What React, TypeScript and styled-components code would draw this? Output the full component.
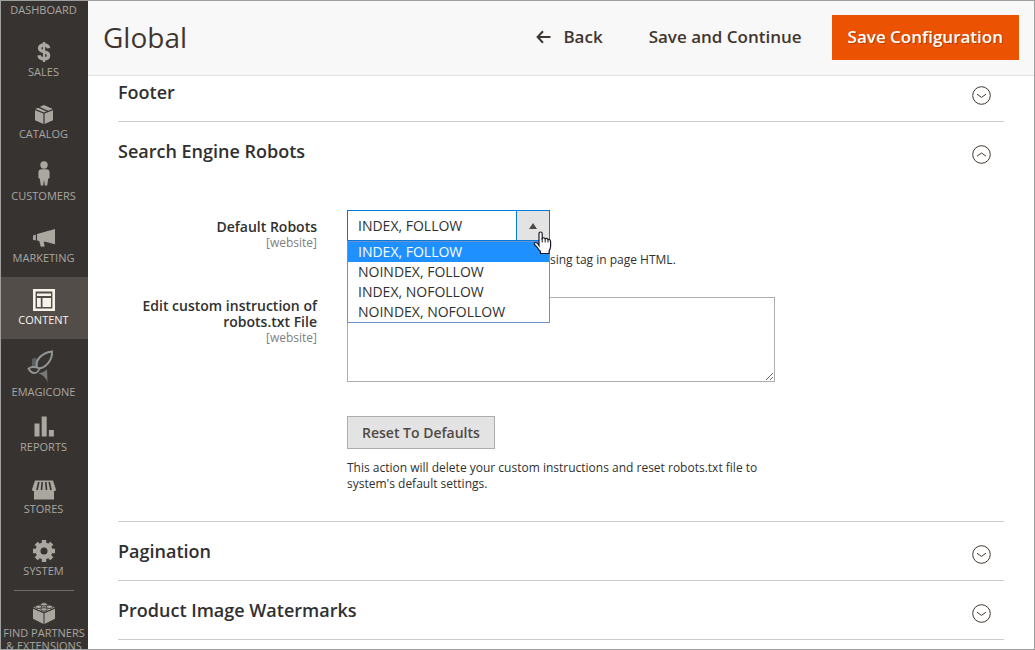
import React, { useState } from 'react';
import styled, { createGlobalStyle, css } from 'styled-components';

const GlobalStyle = createGlobalStyle`
  *, *::before, *::after { box-sizing: border-box; }
  body {
    margin: 0;
    background: #fff;
    color: #303030;
    font-family: "Open Sans", "Noto Sans", sans-serif;
    font-size: 14px;
    line-height: 16px;
  }
  button, select, textarea { font-family: inherit; }
`;

const Page = styled.div`
  display: flex;
  height: 100vh;
  overflow: hidden;
  border: 1px solid #9f9f9f;
`;

const Sidebar = styled.nav`
  flex: none;
  width: 87px;
  background: #373330;
  overflow: hidden;
`;

const Menu = styled.ul`
  margin: 0;
  padding: 0;
  list-style: none;
`;

const MenuLink = styled.a<{ $active?: boolean; $size?: 'cut' | 'tall' }>`
  display: flex;
  flex-direction: column;
  align-items: center;
  justify-content: flex-end;
  height: 62px;
  padding: 0 2px 12px 0;
  color: #aaa6a0;
  font-size: 11px;
  line-height: 14px;
  text-align: center;
  text-decoration: none;
  text-transform: uppercase;
  white-space: nowrap;
  ${(p) => p.$size === 'cut' && css`height: 28px;`}
  ${(p) => p.$size === 'tall' && css`height: 65px; padding-bottom: 5px;`}
  ${(p) => p.$active && css`background: #524d49; color: #f7f3eb;`}

  svg { display: block; margin-bottom: 2px; }
`;

const PartnersItem = styled.li`
  margin: 0 14px 0 13px;
  border-top: 1px solid #736963;
`;

const PartnersLink = styled.a`
  display: flex;
  flex-direction: column;
  align-items: center;
  margin: 0 -14px;
  padding-top: 10px;
  color: #aaa6a0;
  font-size: 11px;
  line-height: 13px;
  text-align: center;
  text-decoration: none;
  text-transform: uppercase;
  white-space: nowrap;

  svg { display: block; margin-bottom: 1px; }
`;

const Main = styled.main`
  flex: 1;
  min-width: 0;
`;

const Toolbar = styled.header`
  position: relative;
  z-index: 2;
  display: flex;
  align-items: center;
  justify-content: space-between;
  height: 75px;
  padding: 0 15px 2px;
  background: #f8f8f8;
  border-bottom: 1px solid #e3e3e3;
`;

const PageTitle = styled.h1`
  margin: 0;
  color: #41362f;
  font-size: 28px;
  font-weight: 400;
  line-height: 36px;
`;

const Actions = styled.div`
  display: flex;
  align-items: center;
  gap: 14px;
`;

const ActionButton = styled.button<{ $primary?: boolean }>`
  display: flex;
  align-items: center;
  justify-content: center;
  gap: 12px;
  height: 45px;
  padding: 0 16px;
  border: 0;
  background: transparent;
  color: #41362f;
  font-size: 17px;
  font-weight: 600;
  line-height: 24px;
  white-space: nowrap;
  ${(p) => p.$primary && css`
    background: #eb5202;
    color: #fff;
    text-shadow: 1px 1px 0 rgba(0, 0, 0, 0.25);
  `}
`;

const Sections = styled.div`
  margin: -13px 30px 0;
`;

const Section = styled.section`
  border-bottom: 1px solid #ccc;
`;

const SectionTitle = styled.h2`
  margin: 0;
`;

const SectionToggle = styled.button`
  display: flex;
  align-items: center;
  justify-content: space-between;
  width: 100%;
  height: 58px;
  padding: 0 13px 0 0;
  border: 0;
  background: transparent;
  color: #303030;
  font-size: 18px;
  font-weight: 600;
  line-height: 24px;
  text-align: left;

  svg { margin-top: 6px; }
`;

const Fields = styled.div`
  display: grid;
  grid-template-columns: 199px minmax(0, 428px);
  column-gap: 30px;
  row-gap: 29px;
  padding: 30px 0 29px;
`;

const FieldLabel = styled.label<{ $inline?: boolean }>`
  padding-top: ${(p) => (p.$inline ? 9 : 1)}px;
  font-weight: 600;
  text-align: right;
`;

const Scope = styled.span`
  display: block;
  color: #808080;
  font-size: 12px;
  font-weight: 400;
  line-height: 16px;
`;

const Control = styled.div`
  grid-column: 2;
`;

const SelectBox = styled.div`
  position: relative;
  width: 203px;
`;

const Select = styled.select`
  display: block;
  appearance: none;
  width: 100%;
  height: 31px;
  padding: 0 44px 0 10px;
  border: 1px solid #007bdb;
  border-radius: 0;
  outline: 0;
  background: #fff;
  color: #303030;
  font-size: 14px;
`;

const SelectArrow = styled.span`
  position: absolute;
  top: 0;
  right: 0;
  display: flex;
  align-items: center;
  justify-content: center;
  width: 34px;
  height: 31px;
  border: 1px solid #007bdb;
  background: #e3e3e3;
  pointer-events: none;
`;

const OptionList = styled.ul`
  position: absolute;
  z-index: 1;
  top: 31px;
  left: 0;
  right: 0;
  margin: 0;
  padding: 0;
  border: 1px solid #6f8fd0;
  background: #fff;
  list-style: none;
`;

const Option = styled.li<{ $selected?: boolean }>`
  padding: 0 10px;
  line-height: 20px;
  background: ${(p) => (p.$selected ? '#1e90ff' : '#fff')};
  color: ${(p) => (p.$selected ? '#fff' : '#303030')};
`;

const Pointer = styled.svg`
  position: absolute;
  z-index: 2;
  top: 21px;
  left: 186px;
`;

const Note = styled.p`
  margin: 11px 0 0;
  font-size: 12px;
  line-height: 16px;
`;

const TextArea = styled.textarea`
  display: block;
  width: 100%;
  height: 85px;
  padding: 8px 10px;
  border: 1px solid #adadad;
  border-radius: 0;
  font-size: 14px;
  resize: vertical;
`;

const ResetRow = styled(Control)`
  padding-top: 5px;
`;

const ResetButton = styled.button`
  height: 33px;
  padding: 0 14px;
  border: 1px solid #adadad;
  background: #e3e3e3;
  color: #514943;
  font-size: 14px;
  font-weight: 600;
`;

const Chevron = ({ up }: { up?: boolean }) => (
  <svg width="19" height="19" viewBox="0 0 19 19" fill="none" stroke="#41362f" aria-hidden="true">
    <circle cx="9.5" cy="9.5" r="8.8" />
    <path d={up ? 'M5 11.2 9.5 8 14 11.2' : 'M5 8.2 9.5 11.4 14 8.2'} />
  </svg>
);

const BackArrow = () => (
  <svg width="15" height="14" viewBox="0 0 15 14" fill="none" stroke="#41362f" strokeWidth="2" aria-hidden="true">
    <path d="M7 1.2 1.6 7 7 12.8M1.8 7H14.5" />
  </svg>
);

const icons: Record<string, React.ReactNode> = {
  sales: (
    <svg width="16" height="22" viewBox="0 0 16 22" fill="none" stroke="currentColor" aria-hidden="true">
      <path strokeWidth="3.4" d="M12.6 7.2C12.3 5 10.6 4 8 4 5.300 4 3.600 5.200 3.600 7.200 3.600 9.400 5.500 10 8 10.600 10.800 11.300 12.600 12 12.600 14.400 12.600 16.600 10.800 17.800 8 17.800 5.100 17.800 3.300 16.600 3 14.200" />
      <path strokeWidth="2.200" d="M8 1v20" />
    </svg>
  ),
  catalog: (
    <svg width="20" height="22" viewBox="0 0 20 22" fill="currentColor" aria-hidden="true">
      <path d="M1 7.200 9.400 10.600V21L1 17.200ZM19 7.200 10.600 10.600V21L19 17.200Z" />
      <path d="M1.200 6 4 4.700 12.400 8.300 9.900 9.400ZM5.800 3.900 9.900 2 18.800 6 14.200 7.700Z" />
    </svg>
  ),
  customers: (
    <svg width="14" height="26" viewBox="0 0 14 26" fill="currentColor" aria-hidden="true">
      <circle cx="7" cy="4" r="3.700" />
      <path d="M4 8.200H10Q12.500 8.400 12.600 11V16.500Q12.500 17.800 11.200 17.500L10.200 24.500H7.800L7 18.500 6.200 24.500H3.800L2.800 17.500Q1.500 17.800 1.400 16.500V11Q1.500 8.400 4 8.200Z" />
    </svg>
  ),
  marketing: (
    <svg width="22" height="22" viewBox="0 0 22 22" fill="currentColor" aria-hidden="true">
      <path d="M0 8.500 2.800 7.500V13.500L0 12.800ZM4 7 22 2V17.200L11.300 14.600 10.800 15.200 11.700 19.400 7.800 19.700 6.200 13.900 4 13.500Z" />
    </svg>
  ),
  content: (
    <svg width="22" height="22" viewBox="0 0 22 22" fill="none" stroke="currentColor" aria-hidden="true">
      <path strokeWidth="2.600" d="M1.300 1.300H20.700V20.700H1.300Z" />
      <path fill="currentColor" stroke="none" d="M4 4.500H18V7H4ZM4 9H7.800V18H4ZM9.500 9H18V18H9.500Z" />
      <path stroke="#524d49" d="M3.500 3.500H18.500V18.500H3.500ZM3.500 8H18.500M8.500 8V18" />
    </svg>
  ),
  emagicone: (
    <svg width="34" height="34" viewBox="0 0 34 34" fill="none" aria-hidden="true">
      <path fill="#5c5d5e" d="M5 10 8 8.500 12 12 10 20 5 18Z" />
      <path fill="#77797a" d="M11.500 24Q16 24 20 20.500L20.500 33.500Q19 27.500 11.500 24Z" />
      <path fill="#373330" stroke="#929596" strokeWidth="2" d="M25 2.500C14 4 7 12 10.500 19.500 18 19.500 25.500 12 25 2.500Z" />
      <path fill="#373330" stroke="#929596" strokeWidth="1.800" d="M1.500 19.500Q6 16.500 12.500 19.500 10.500 24.500 7 24 3.500 23.500 1.500 19.500Z" />
    </svg>
  ),
  reports: (
    <svg width="20" height="22" viewBox="0 0 20 22" fill="currentColor" aria-hidden="true">
      <path d="M0.500 7.500H5.500V20.500H0.500ZM7.700 0.500H12.700V20.500H7.700ZM14.900 14H19.900V20.500H14.900Z" />
    </svg>
  ),
  stores: (
    <svg width="26" height="22" viewBox="0 0 26 22" fill="currentColor" aria-hidden="true">
      <path d="M4 2.500H22L25 11.500Q25 13.300 23 13.300V21.500H3V13.300Q1 13.300 1 11.500Z" />
      <path d="M7.800 4 6 12M11.200 4 10.500 12M14.800 4 15.500 12M18.200 4 20 12" stroke="#373330" strokeWidth="1.600" />
    </svg>
  ),
  system: (
    <svg width="24" height="24" viewBox="0 0 24 24" fill="none" stroke="currentColor" aria-hidden="true">
      <circle cx="12" cy="13" r="6" strokeWidth="5" />
      <path strokeWidth="4.400" d="M12 2V6M12 20V24M1 13H5M19 13H23M4.200 5.200 7 8M17 18 19.800 20.800M4.200 20.800 7 18M17 8 19.800 5.200" />
    </svg>
  ),
  partners: (
    <svg width="24" height="24" viewBox="0 0 24 24" fill="currentColor" aria-hidden="true">
      <path d="M1 7.800 11.500 12.300V23L1 17.800ZM23 7.800 12.500 12.300V23L23 17.800Z" />
      <path d="M1.200 6.600 12 2 22.800 6.600 12 11.300Z" />
      <g stroke="#373330" strokeWidth="0.900">
        <ellipse cx="12" cy="3.300" rx="3.200" ry="1.700" />
        <ellipse cx="6.500" cy="5.800" rx="3.200" ry="1.700" />
        <ellipse cx="17.500" cy="5.800" rx="3.200" ry="1.700" />
        <ellipse cx="12" cy="8.400" rx="3.200" ry="1.700" />
      </g>
    </svg>
  ),
};

const menu: { label: string; icon?: string; active?: boolean; size?: 'cut' | 'tall' }[] = [
  { label: 'Dashboard', size: 'cut' },
  { label: 'Sales', icon: 'sales' },
  { label: 'Catalog', icon: 'catalog' },
  { label: 'Customers', icon: 'customers' },
  { label: 'Marketing', icon: 'marketing' },
  { label: 'Content', icon: 'content', active: true },
  { label: 'eMagicOne', icon: 'emagicone', size: 'tall' },
  { label: 'Reports', icon: 'reports' },
  { label: 'Stores', icon: 'stores' },
  { label: 'System', icon: 'system' },
];

const robots = ['INDEX, FOLLOW', 'NOINDEX, FOLLOW', 'INDEX, NOFOLLOW', 'NOINDEX, NOFOLLOW'];

const Collapsible = ({ title, open, children }: { title: string; open?: boolean; children?: React.ReactNode }) => (
  <Section>
    <SectionTitle>
      <SectionToggle type="button" aria-expanded={!!open}>
        {title}
        <Chevron up={open} />
      </SectionToggle>
    </SectionTitle>
    {children}
  </Section>
);

export default function App() {
  const [value, setValue] = useState(robots[0]);

  return (
    <>
      <GlobalStyle />
      <Page>
        <Sidebar aria-label="Main menu">
          <Menu>
            {menu.map((m) => (
              <li key={m.label}>
                <MenuLink href="#" $active={m.active} $size={m.size}>
                  {m.icon && icons[m.icon]}
                  {m.label}
                </MenuLink>
              </li>
            ))}
            <PartnersItem>
              <PartnersLink href="#">
                {icons.partners}
                <span>
                  Find Partners
                  <br />
                  &amp; Extensions
                </span>
              </PartnersLink>
            </PartnersItem>
          </Menu>
        </Sidebar>
        <Main>
          <Toolbar>
            <PageTitle>Global</PageTitle>
            <Actions>
              <ActionButton type="button">
                <BackArrow />
                Back
              </ActionButton>
              <ActionButton type="button">Save and Continue</ActionButton>
              <ActionButton type="button" $primary>Save Configuration</ActionButton>
            </Actions>
          </Toolbar>
          <Sections>
            <Collapsible title="Footer" />
            <Collapsible title="Search Engine Robots" open>
              <Fields>
                <FieldLabel htmlFor="robots" $inline>
                  Default Robots
                  <Scope>[website]</Scope>
                </FieldLabel>
                <Control>
                  <SelectBox>
                    <Select id="robots" value={value} onChange={(e) => setValue(e.target.value)}>
                      {robots.map((r) => <option key={r}>{r}</option>)}
                    </Select>
                    <SelectArrow>
                      <svg width="8" height="6" viewBox="0 0 8 6" aria-hidden="true">
                        <path d="M4 0 8 6H0Z" fill="#514943" />
                      </svg>
                    </SelectArrow>
                    <OptionList role="listbox" aria-label="Default Robots">
                      {robots.map((r) => (
                        <Option key={r} role="option" aria-selected={r === value} $selected={r === value} onClick={() => setValue(r)}>
                          {r}
                        </Option>
                      ))}
                    </OptionList>
                    <Pointer width="19" height="24" viewBox="0 0 19 24" aria-hidden="true">
                      <path
                        d="M6 14.500V2.800Q6 1 7.600 1T9.200 2.800V7.500Q10.700 5.900 12.200 7.800 13.900 6.600 14.900 8.600 17.300 7.800 17.600 10.500V15Q17.600 17.500 16.200 19.500V22.500H7.500V20.500Q5.500 18.800 4.500 16.800L1.300 13.200Q1 11.400 3 11.500 4.500 11.800 6 14.500Z"
                        fill="#fff"
                        stroke="#1a1a24"
                        strokeWidth="1.200"
                      />
                      <path d="M9.200 7V11.500M12.200 8V11.500M15 9V11.500" stroke="#1a1a24" />
                    </Pointer>
                  </SelectBox>
                  <Note>This will be included before head closing tag in page HTML.</Note>
                </Control>
                <FieldLabel htmlFor="instructions">
                  Edit custom instruction of robots.txt File
                  <Scope>[website]</Scope>
                </FieldLabel>
                <Control>
                  <TextArea id="instructions" />
                </Control>
                <ResetRow>
                  <ResetButton type="button">Reset To Defaults</ResetButton>
                  <Note>This action will delete your custom instructions and reset robots.txt file to system's default settings.</Note>
                </ResetRow>
              </Fields>
            </Collapsible>
            <Collapsible title="Pagination" />
            <Collapsible title="Product Image Watermarks" />
          </Sections>
        </Main>
      </Page>
    </>
  );
}
